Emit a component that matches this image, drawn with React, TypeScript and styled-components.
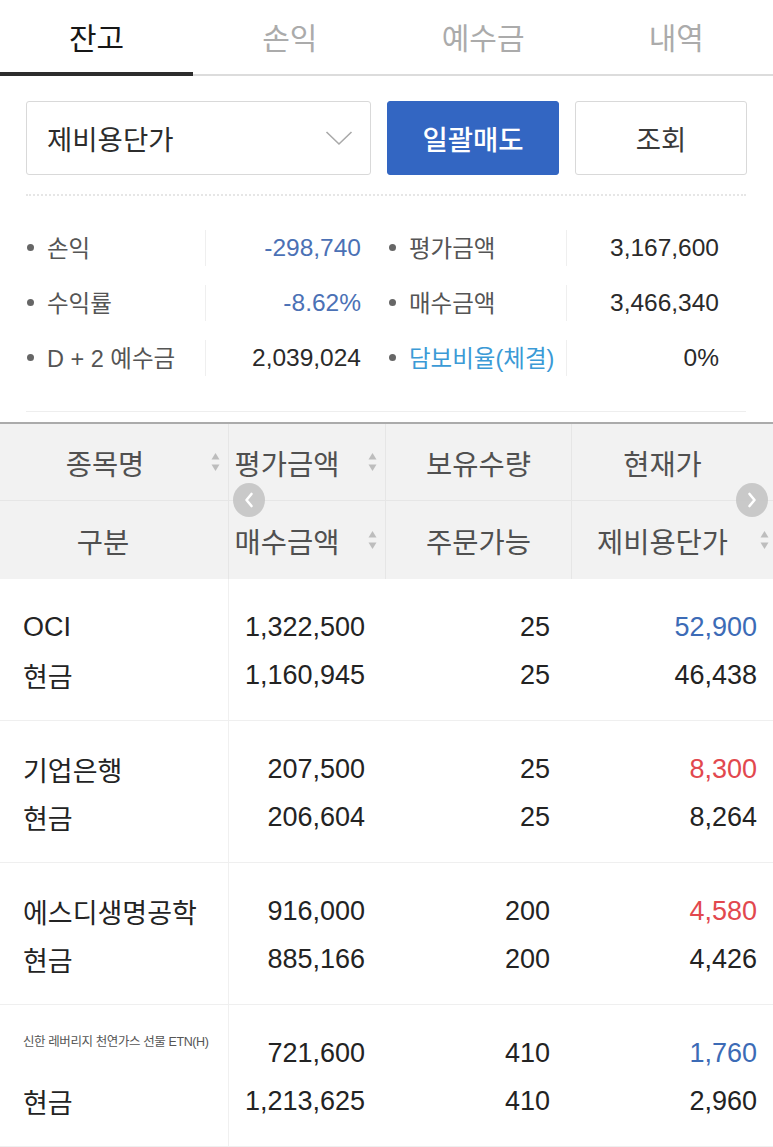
import React from "react";
import styled, { createGlobalStyle } from "styled-components";

const Global = createGlobalStyle`
  html, body { margin: 0; padding: 0; background: #fff; }
  body {
    font-family: "Liberation Sans", "Noto Sans CJK KR", "Noto Sans", sans-serif;
    color: #222;
    -webkit-font-smoothing: antialiased;
  }
  * { box-sizing: border-box; }
`;

const Page = styled.div`
  width: 773px;
  overflow: hidden;
  background: #fff;
`;

/* ---------- Tabs ---------- */
const TabBar = styled.div`
  display: grid;
  grid-template-columns: repeat(4, 1fr);
  height: 76px;
  border-bottom: 2px solid #dcdcdc;
`;

const Tab = styled.div<{ $active?: boolean }>`
  position: relative;
  display: flex;
  align-items: center;
  justify-content: center;
  padding-bottom: 2px;
  font-size: 30px;
  color: ${(p) => (p.$active ? "#161616" : "#ababab")};
  font-weight: 400;
  &::after {
    content: "";
    display: ${(p) => (p.$active ? "block" : "none")};
    position: absolute;
    left: 0;
    right: 0;
    bottom: -2px;
    height: 4px;
    background: #2d2d2d;
  }
`;

/* ---------- Controls ---------- */
const Controls = styled.div`
  display: grid;
  grid-template-columns: 345px 172px 172px;
  column-gap: 16px;
  margin: 25px 27px 0 26px;
  height: 74px;
`;

const SelectBox = styled.div`
  display: flex;
  align-items: center;
  justify-content: space-between;
  padding: 0 17px 0 20px;
  border: 1px solid #d9d9d9;
  border-radius: 3px;
  font-size: 27.5px;
  color: #2c2c2c;
`;

const Button = styled.div<{ $primary?: boolean }>`
  display: flex;
  align-items: center;
  justify-content: center;
  border-radius: 3px;
  font-size: 27.5px;
  font-weight: ${(p) => (p.$primary ? 500 : 400)};
  background: ${(p) => (p.$primary ? "#3366c2" : "#fff")};
  color: ${(p) => (p.$primary ? "#fff" : "#3a3a3a")};
  border: 1px solid ${(p) => (p.$primary ? "#3366c2" : "#d9d9d9")};
`;

const DottedRule = styled.div`
  margin: 19px 27px 0 26px;
  border-top: 2px dotted #e6e6e6;
`;

/* ---------- Summary ---------- */
const Summary = styled.div`
  display: grid;
  grid-template-columns: 179px 183px 178px 1fr;
  grid-auto-rows: 55px;
  margin: 0 27px 0 26px;
  padding: 24px 0 26px;
  border-bottom: 1px solid #eeeeee;
`;

const SumLabel = styled.div<{ $accent?: boolean }>`
  display: flex;
  align-items: center;
  gap: 13px;
  padding-bottom: 2px;
  font-size: 23.5px;
  color: ${(p) => (p.$accent ? "#3b9ad6" : "#555")};
  &::before {
    content: "";
    width: 7px;
    height: 7px;
    border-radius: 50%;
    background: #666;
    margin-left: 1px;
    margin-top: 2px;
  }
`;

const SumValue = styled.div<{ $tone?: "blue" }>`
  align-self: center;
  height: 36px;
  display: flex;
  align-items: center;
  justify-content: flex-end;
  padding-right: 27px;
  border-left: 1px solid #efefef;
  font-size: 24.5px;
  color: ${(p) => (p.$tone === "blue" ? "#4b71b5" : "#2a2a2a")};
`;

/* ---------- Table ---------- */
const Table = styled.div`
  position: relative;
  margin-top: 10px;
  width: 773px;
  overflow: hidden;
`;

const COLS = "229px 157px 186px 206px";

const Head = styled.div`
  display: grid;
  grid-template-columns: ${COLS};
  grid-template-rows: 77px 78px;
  width: 778px;
  background: #f2f2f2;
  border-top: 2px solid #ababab;
`;

const HeadCell = styled.div<{ $padR: number; $top?: boolean }>`
  position: relative;
  display: flex;
  align-items: center;
  justify-content: center;
  padding-right: ${(p) => p.$padR}px;
  font-size: 28.5px;
  color: #505050;
  border-right: 1px solid #e6e6e6;
  border-bottom: ${(p) => (p.$top ? "1px solid #e6e6e6" : "none")};
`;

const SortMark = styled.svg`
  position: absolute;
  right: 8px;
  top: 50%;
  transform: translateY(-50%);
`;

const Sort = () => (
  <SortMark width="9" height="22" viewBox="0 0 9 22">
    <path d="M4.5 2 L8.5 8.5 L0.5 8.5 Z" fill="#bdbdbd" />
    <path d="M4.5 20 L8.5 13.5 L0.5 13.5 Z" fill="#bdbdbd" />
  </SortMark>
);

const Nav = styled.div<{ $side: "left" | "right" }>`
  position: absolute;
  top: 61px;
  left: ${(p) => (p.$side === "left" ? "233px" : "736px")};
  width: 32px;
  height: 34px;
  border-radius: 50%;
  background: rgba(196, 196, 196, 0.9);
  display: flex;
  align-items: center;
  justify-content: center;
`;

const Row = styled.div`
  display: grid;
  grid-template-columns: ${COLS};
  width: 778px;
  height: 142px;
  border-bottom: 1px solid #efefef;
`;

const Cell = styled.div<{ $align: "left" | "right"; $pad: number; $divider?: boolean }>`
  display: flex;
  flex-direction: column;
  padding-top: 24px;
  padding-left: ${(p) => (p.$align === "left" ? p.$pad : 0)}px;
  padding-right: ${(p) => (p.$align === "right" ? p.$pad : 0)}px;
  align-items: ${(p) => (p.$align === "left" ? "flex-start" : "flex-end")};
  border-right: ${(p) => (p.$divider ? "1px solid #f0f0f0" : "none")};
`;

const Line = styled.div<{ $tone?: "blue" | "red" }>`
  height: 48px;
  display: flex;
  align-items: center;
  font-size: 27px;
  color: ${(p) => (p.$tone === "blue" ? "#3c6bb6" : p.$tone === "red" ? "#e2484e" : "#232323")};
`;

const SmallName = styled.div`
  height: 48px;
  padding-top: 5px;
  font-size: 12.5px;
  letter-spacing: -0.4px;
  line-height: 16px;
  color: #555;
`;

type Stock = {
  name: string;
  small?: boolean;
  eval: string;
  buy: string;
  qty: string;
  avail: string;
  price: string;
  tone: "blue" | "red";
  cost: string;
};

const stocks: Stock[] = [
  { name: "OCI", eval: "1,322,500", buy: "1,160,945", qty: "25", avail: "25", price: "52,900", tone: "blue", cost: "46,438" },
  { name: "기업은행", eval: "207,500", buy: "206,604", qty: "25", avail: "25", price: "8,300", tone: "red", cost: "8,264" },
  { name: "에스디생명공학", eval: "916,000", buy: "885,166", qty: "200", avail: "200", price: "4,580", tone: "red", cost: "4,426" },
  { name: "신한 레버리지 천연가스 선물 ETN(H)", small: true, eval: "721,600", buy: "1,213,625", qty: "410", avail: "410", price: "1,760", tone: "blue", cost: "2,960" },
];

const Chevron = ({ dir }: { dir: "left" | "right" }) => (
  <svg width="12" height="18" viewBox="0 0 12 18">
    <path
      d={dir === "left" ? "M8.5 3 L3.5 9 L8.5 15" : "M3.5 3 L8.5 9 L3.5 15"}
      fill="none"
      stroke="#fff"
      strokeWidth="2.6"
      strokeLinecap="round"
      strokeLinejoin="round"
    />
  </svg>
);

export default function App() {
  return (
    <Page>
      <Global />
      <TabBar>
        <Tab $active>잔고</Tab>
        <Tab>손익</Tab>
        <Tab>예수금</Tab>
        <Tab>내역</Tab>
      </TabBar>

      <Controls>
        <SelectBox>
          <span>제비용단가</span>
          <svg width="28" height="16" viewBox="0 0 28 16">
            <path d="M1.5 2 L14 14 L26.5 2" fill="none" stroke="#a9a9a9" strokeWidth="1.6" />
          </svg>
        </SelectBox>
        <Button $primary>일괄매도</Button>
        <Button>조회</Button>
      </Controls>

      <DottedRule />

      <Summary>
        <SumLabel>손익</SumLabel>
        <SumValue $tone="blue">-298,740</SumValue>
        <SumLabel>평가금액</SumLabel>
        <SumValue>3,167,600</SumValue>

        <SumLabel>수익률</SumLabel>
        <SumValue $tone="blue">-8.62%</SumValue>
        <SumLabel>매수금액</SumLabel>
        <SumValue>3,466,340</SumValue>

        <SumLabel>D + 2 예수금</SumLabel>
        <SumValue>2,039,024</SumValue>
        <SumLabel $accent>담보비율(체결)</SumLabel>
        <SumValue>0%</SumValue>
      </Summary>

      <Table>
        <Head>
          <HeadCell $padR={18} $top>
            종목명
            <Sort />
          </HeadCell>
          <HeadCell $padR={40} $top>
            평가금액
            <Sort />
          </HeadCell>
          <HeadCell $padR={0} $top>
            보유수량
          </HeadCell>
          <HeadCell $padR={24} $top>
            현재가
          </HeadCell>

          <HeadCell $padR={22}>구분</HeadCell>
          <HeadCell $padR={40}>
            매수금액
            <Sort />
          </HeadCell>
          <HeadCell $padR={0}>주문가능</HeadCell>
          <HeadCell $padR={24}>
            제비용단가
            <Sort />
          </HeadCell>
        </Head>

        <Nav $side="left">
          <Chevron dir="left" />
        </Nav>
        <Nav $side="right">
          <Chevron dir="right" />
        </Nav>

        {stocks.map((s) => (
          <Row key={s.name}>
            <Cell $align="left" $pad={23} $divider>
              {s.small ? <SmallName>{s.name}</SmallName> : <Line>{s.name}</Line>}
              <Line>현금</Line>
            </Cell>
            <Cell $align="right" $pad={21}>
              <Line>{s.eval}</Line>
              <Line>{s.buy}</Line>
            </Cell>
            <Cell $align="right" $pad={22}>
              <Line>{s.qty}</Line>
              <Line>{s.avail}</Line>
            </Cell>
            <Cell $align="right" $pad={21}>
              <Line $tone={s.tone}>{s.price}</Line>
              <Line>{s.cost}</Line>
            </Cell>
          </Row>
        ))}
      </Table>
    </Page>
  );
}
